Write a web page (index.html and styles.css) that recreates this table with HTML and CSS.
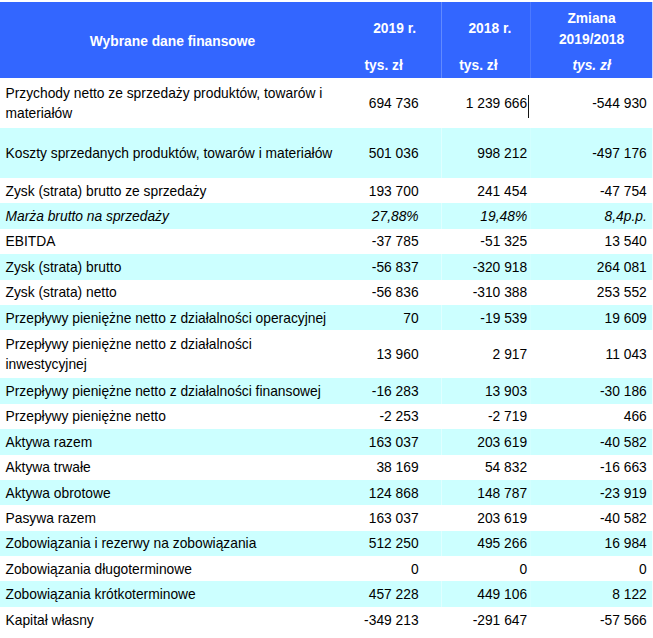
FILE: index.html
```html
<!DOCTYPE html>
<html lang="pl">
<head>
<meta charset="utf-8">
<title>Wybrane dane finansowe</title>
<link rel="stylesheet" href="styles.css">
</head>
<body>
<div class="sheet">
<table class="fin">
  <colgroup>
    <col class="c-label"><col class="c-y1"><col class="c-y2"><col class="c-ch">
  </colgroup>
  <thead>
    <tr class="h-top">
      <th class="h-title" rowspan="2">Wybrane dane finansowe</th>
      <th class="h-year h-year1">2019 r.</th>
      <th class="h-year h-year2">2018 r.</th>
      <th class="h-change">Zmiana<br>2019/2018</th>
    </tr>
    <tr class="h-unit">
      <th class="u1">tys. zł</th>
      <th class="u2">tys. zł</th>
      <th class="u3"><em>tys. zł</em></th>
    </tr>
  </thead>
  <tbody>
    <tr class="tall"><td>Przychody netto ze sprzedaży produktów, towarów i<br>materiałów</td><td>694 736</td><td>1 239 666<span class="caret"></span></td><td>-544 930</td></tr>
    <tr class="tall alt"><td>Koszty sprzedanych produktów, towarów i materiałów</td><td>501 036</td><td>998 212</td><td>-497 176</td></tr>
    <tr><td>Zysk (strata) brutto ze sprzedaży</td><td>193 700</td><td>241 454</td><td>-47 754</td></tr>
    <tr class="alt it"><td>Marża brutto na sprzedaży</td><td>27,88%</td><td>19,48%</td><td>8,4p.p.</td></tr>
    <tr><td>EBITDA</td><td>-37 785</td><td>-51 325</td><td>13 540</td></tr>
    <tr class="alt"><td>Zysk (strata) brutto</td><td>-56 837</td><td>-320 918</td><td>264 081</td></tr>
    <tr><td>Zysk (strata) netto</td><td>-56 836</td><td>-310 388</td><td>253 552</td></tr>
    <tr class="alt"><td>Przepływy pieniężne netto z działalności operacyjnej</td><td>70</td><td>-19 539</td><td>19 609</td></tr>
    <tr class="tall2"><td>Przepływy pieniężne netto z działalności<br>inwestycyjnej</td><td>13 960</td><td>2 917</td><td>11 043</td></tr>
    <tr class="alt"><td>Przepływy pieniężne netto z działalności finansowej</td><td>-16 283</td><td>13 903</td><td>-30 186</td></tr>
    <tr><td>Przepływy pieniężne netto</td><td>-2 253</td><td>-2 719</td><td>466</td></tr>
    <tr class="alt"><td>Aktywa razem</td><td>163 037</td><td>203 619</td><td>-40 582</td></tr>
    <tr><td>Aktywa trwałe</td><td>38 169</td><td>54 832</td><td>-16 663</td></tr>
    <tr class="alt"><td>Aktywa obrotowe</td><td>124 868</td><td>148 787</td><td>-23 919</td></tr>
    <tr><td>Pasywa razem</td><td>163 037</td><td>203 619</td><td>-40 582</td></tr>
    <tr class="alt"><td>Zobowiązania i rezerwy na zobowiązania</td><td>512 250</td><td>495 266</td><td>16 984</td></tr>
    <tr><td>Zobowiązania długoterminowe</td><td>0</td><td>0</td><td>0</td></tr>
    <tr class="alt"><td>Zobowiązania krótkoterminowe</td><td>457 228</td><td>449 106</td><td>8 122</td></tr>
    <tr><td>Kapitał własny</td><td>-349 213</td><td>-291 647</td><td>-57 566</td></tr>
  </tbody>
</table>
</div>
</body>
</html>
```
FILE: styles.css
```css
html, body {
  margin: 0;
  padding: 0;
  background: #ffffff;
}
body {
  padding-top: 2px;
  font-family: "Liberation Sans", Arial, sans-serif;
  font-size: 15px;
  color: #000000;
}
/* clip box: the table is laid out slightly wider and condensed horizontally,
   imitating the narrow typeface of the original */
.sheet {
  width: 653px;
  overflow: hidden;
}
.fin {
  width: 709px;
  border-collapse: collapse;
  table-layout: fixed;
  transform: scaleX(0.92);
  transform-origin: 0 0;
}
.c-label { width: 375px; }
.c-y1 { width: 105px; }
.c-y2 { width: 97px; }
.c-ch { width: 132px; }

.fin thead th {
  background: #3366ff;
  color: #ffffff;
  font-weight: bold;
  padding: 0;
  line-height: 20px;
  text-align: center;
}
.h-top { height: 48px; }
.h-unit { height: 28px; }
.fin thead th.h-title { vertical-align: middle; padding-top: 1px; }
.fin thead th.h-year { vertical-align: middle; padding-top: 4px; }
.fin thead th.h-year1 { padding-left: 3px; }
.fin thead th.h-year2 { padding-left: 8px; }
.fin thead th.h-change { vertical-align: middle; padding-top: 3px; line-height: 21px; }
.fin thead .h-unit th { vertical-align: top; padding-top: 5px; }
.fin thead th.u1 { padding-right: 21px; }
.fin thead th.u2 { padding-right: 17px; }
.u3 em { font-style: italic; }

.fin tbody td {
  height: 25.4px;
  padding: 0;
  line-height: 20px;
  text-align: right;
  vertical-align: middle;
}
.fin tbody td:first-child {
  text-align: left;
  padding-left: 6px;
}
.fin tbody td:nth-child(2) { padding-right: 25px; }
.fin tbody td:nth-child(3) { padding-right: 4px; position: relative; }
.fin tbody td:nth-child(4) { padding-right: 6px; }
.fin tbody tr.tall td { height: 50px; }
.fin tbody tr.tall2 td { height: 48px; }
.fin tbody tr.alt td { background: #ccffff; }
.fin tbody tr.it td { font-style: italic; }
.caret {
  position: absolute;
  right: 2px;
  top: 17px;
  width: 1px;
  height: 23px;
  background: #000000;
}
```
